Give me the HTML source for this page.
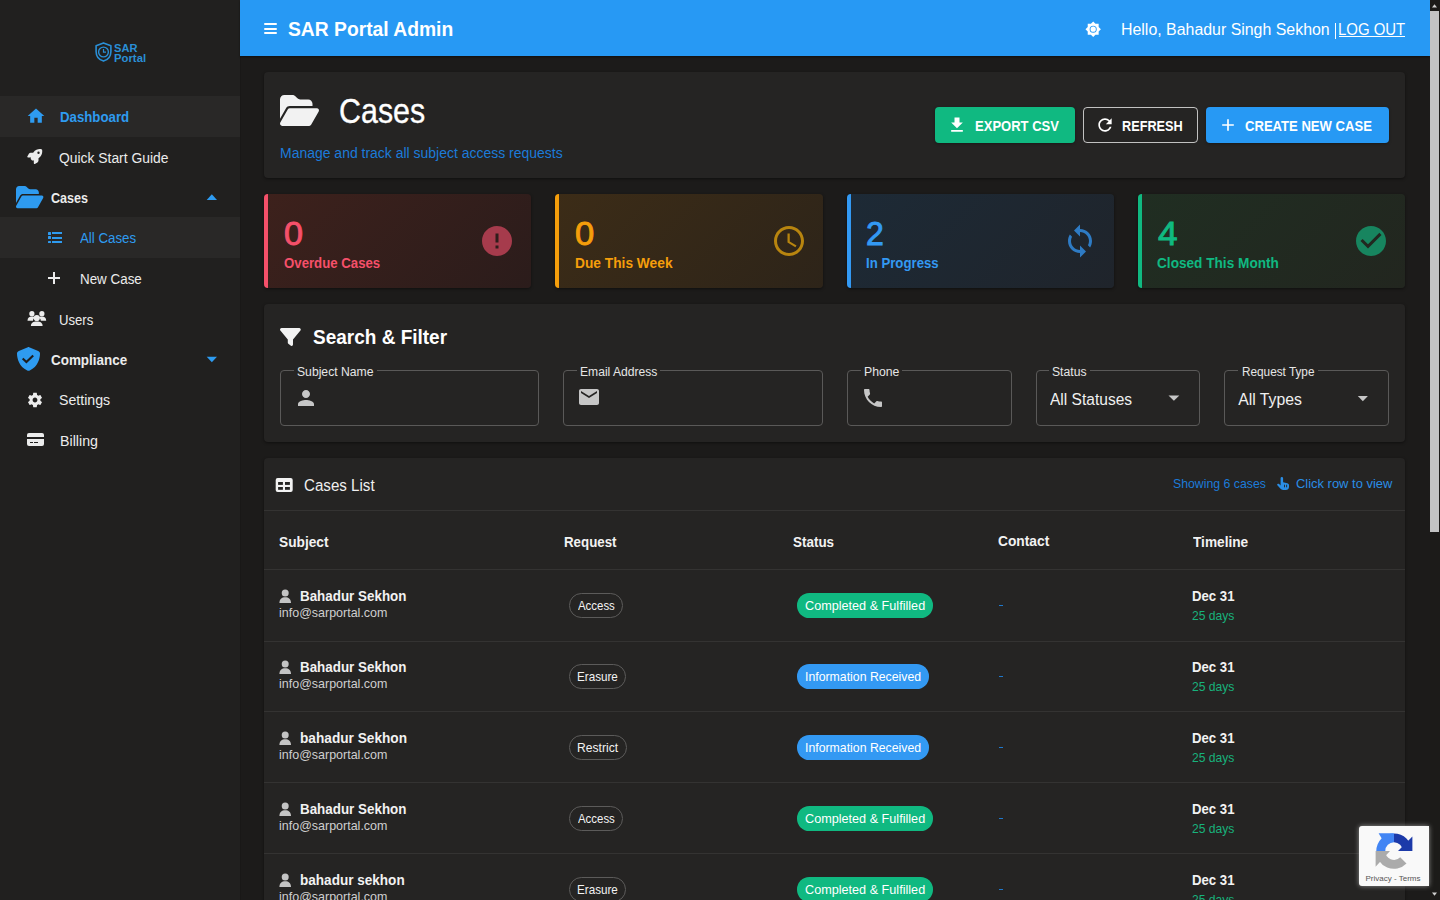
<!DOCTYPE html>
<html><head><meta charset="utf-8"><title>SAR Portal Admin - Cases</title>
<style>
html,body{margin:0;padding:0;width:1440px;height:900px;overflow:hidden;background:#1c1b1a;font-family:"Liberation Sans",sans-serif}
.t{position:absolute;white-space:pre;transform-origin:0 0}
.r{position:absolute;box-sizing:border-box}
svg{position:absolute;overflow:visible}
</style></head><body>
<!-- sidebar -->
<div class="r" style="left:0;top:0;width:240px;height:900px;background:#21201f"></div>
<div class="r" style="left:240px;top:0;width:1px;height:900px;background:#191817"></div>
<div class="r" style="left:0;top:96px;width:240px;height:41px;background:#292827"></div>
<div class="r" style="left:0;top:217px;width:240px;height:41px;background:#292827"></div>
<!-- logo -->
<svg style="left:95px;top:42px" width="17" height="20" viewBox="0 0 17 20">
 <path d="M8.5 0.9 L15.9 3.7 V9.4 C15.9 14.1 12.9 17.7 8.5 19.1 C4.1 17.7 1.1 14.1 1.1 9.4 V3.7 Z" fill="none" stroke="#2a8fd6" stroke-width="1.6" stroke-linejoin="round"/>
 <circle cx="8.5" cy="10" r="4.9" fill="none" stroke="#2a8fd6" stroke-width="1.4"/>
 <path d="M8.5 6.9 V10.2 H11" fill="none" stroke="#2a8fd6" stroke-width="1.2"/>
</svg>
<!-- home -->
<svg style="left:26px;top:106.2px" width="20" height="20" viewBox="0 0 24 24"><path fill="#2e9bf0" d="M10 20v-6h4v6h5v-8h3L12 3 2 12h3v8z"/></svg>
<!-- rocket -->
<svg style="left:27.3px;top:149.2px" width="15.5" height="15" viewBox="0 0 512 512"><path fill="#ececec" d="M156.6 384.9L125.7 354c-8.5-8.5-11.5-20.8-7.7-32.2c3-8.9 7-20.5 11.8-33.8L24 288c-8.6 0-16.6-4.6-20.9-12.1s-4.2-16.7 .2-24.1l52.5-88.5c13-21.9 36.5-35.3 61.9-35.3l82.3 0c2.4-4 4.8-7.7 7.2-11.3C289.1-4.1 411.1-8.1 483.9 5.3c11.6 2.1 20.6 11.2 22.8 22.8c13.4 72.9 9.3 194.8-111.4 277.2c-3.5 2.4-7.3 4.8-11.3 7.2l0 82.3c0 25.4-13.4 49-35.3 61.9l-88.5 52.5c-7.4 4.4-16.6 4.5-24.1 .2s-12.1-12.2-12.1-20.9l0-107.2c-14.1 4.9-26.4 8.9-35.7 11.9c-11.2 3.6-23.4 .5-31.8-7.8zM384 168a40 40 0 1 0 0-80 40 40 0 1 0 0 80z"/></svg>
<!-- folder sidebar -->
<svg style="left:15.6px;top:185.8px" width="27.4" height="22.2" viewBox="0 32 576 448" preserveAspectRatio="none"><path fill="#2e9bf0" d="M88.7 223.8L0 375.8V96C0 60.7 28.7 32 64 32H181.5c17 0 33.3 6.7 45.3 18.7l26.5 26.5c12 12 28.3 18.7 45.3 18.7H416c35.3 0 64 28.7 64 64v32H144c-22.8 0-43.8 12.1-55.3 31.8zm27.6 16.1C122.1 230 132.6 224 144 224H544c11.5 0 22 6.1 27.7 16.1s5.7 22.2-.1 32.1l-112 192C453.9 474 443.4 480 432 480H32c-11.5 0-22-6.1-27.7-16.1s-5.7-22.2 .1-32.1l112-192z"/></svg>
<!-- caret up -->
<svg style="left:0;top:0" width="1" height="1"><polygon points="206.7,200 217,200 211.85,194.2" fill="#2e9bf0"/></svg>
<!-- list icon -->
<div class="r" style="left:48.1px;top:232px;width:2.6px;height:2.6px;background:#2e9bf0;border-radius:.5px"></div>
<div class="r" style="left:48.1px;top:236.4px;width:2.6px;height:2.6px;background:#2e9bf0;border-radius:.5px"></div>
<div class="r" style="left:48.1px;top:240.8px;width:2.6px;height:2.6px;background:#2e9bf0;border-radius:.5px"></div>
<div class="r" style="left:51.6px;top:232.4px;width:10.5px;height:1.8px;background:#2e9bf0"></div>
<div class="r" style="left:51.6px;top:236.8px;width:10.5px;height:1.8px;background:#2e9bf0"></div>
<div class="r" style="left:51.6px;top:241.2px;width:10.5px;height:1.8px;background:#2e9bf0"></div>
<!-- plus -->
<div class="r" style="left:48px;top:276.9px;width:12.2px;height:2px;background:#ececec"></div>
<div class="r" style="left:53.1px;top:271.8px;width:2px;height:12.1px;background:#ececec"></div>
<!-- users -->
<svg style="left:0;top:0" width="1" height="1">
 <g fill="#ececec">
 <circle cx="31.9" cy="313.7" r="2.6"/><circle cx="41.9" cy="313.7" r="2.6"/>
 <path d="M27.5 320.8 C27.5 317.8 29.3 316.6 31.9 316.6 C33.3 316.6 34.3 317 34.9 317.6 C33.6 318.6 33 319.6 33 320.8 Z"/>
 <path d="M46.2 320.8 C46.2 317.8 44.5 316.6 41.9 316.6 C40.5 316.6 39.5 317 38.9 317.6 C40.2 318.6 40.8 319.6 40.8 320.8 Z"/>
 <circle cx="36.8" cy="318" r="3.1"/>
 <path d="M30.9 326 C30.9 322.9 33.3 321.6 36.8 321.6 C40.3 321.6 42.6 322.9 42.6 326 Z"/>
 </g>
</svg>
<!-- compliance shield -->
<svg style="left:16.6px;top:347px" width="23" height="24" viewBox="16 0 480 512" preserveAspectRatio="none"><path fill="#2e9bf0" d="M256 0c4.6 0 9.2 1 13.4 2.9L457.7 82.8c22 9.3 38.4 31 38.3 57.2c-.5 99.2-41.3 280.7-213.6 363.2c-16.7 8-36.1 8-52.8 0C57.3 420.7 16.5 239.2 16 140c-.1-26.2 16.3-47.9 38.3-57.2L242.7 2.9C246.8 1 251.4 0 256 0z"/></svg>
<svg style="left:0;top:0" width="1" height="1"><path d="M22.7 358.6 L26.4 362.1 L33.2 355.4" fill="none" stroke="#1f1e1d" stroke-width="2.1"/></svg>
<!-- caret down -->
<svg style="left:0;top:0" width="1" height="1"><polygon points="206.7,356.8 217,356.8 211.85,362.2" fill="#2e9bf0"/></svg>
<!-- gear -->
<svg style="left:25.7px;top:390.9px" width="18" height="18" viewBox="0 0 24 24"><path fill="#ececec" fill-rule="evenodd" d="M19.14 12.94c.04-.3.06-.61.06-.94 0-.32-.02-.64-.07-.94l2.03-1.58c.18-.14.23-.41.12-.61l-1.92-3.32c-.12-.22-.37-.29-.59-.22l-2.39.96c-.5-.38-1.03-.7-1.62-.94l-.36-2.54c-.04-.24-.24-.41-.48-.41h-3.84c-.24 0-.43.17-.47.41l-.36 2.54c-.59.24-1.13.57-1.62.94l-2.39-.96c-.22-.08-.47 0-.59.22L2.74 8.87c-.12.21-.08.47.12.61l2.03 1.580c-.05.3-.09.63-.09.94s.02.64.07.94l-2.03 1.58c-.18.14-.23.41-.12.61l1.92 3.32c.12.22.37.29.59.22l2.39-.96c.5.38 1.030.7 1.62.94l.36 2.54c.05.24.24.41.48.41h3.84c.24 0 .44-.17.47-.41l.36-2.54c.59-.24 1.13-.56 1.62-.94l2.39.96c.22.08.47 0 .59-.22l1.92-3.32c.12-.22.07-.47-.12-.61l-2.01-1.58zM12 15.2c-1.77 0-3.2-1.43-3.2-3.2s1.43-3.2 3.2-3.2 3.2 1.43 3.2 3.2-1.43 3.2-3.2 3.2z"/></svg>
<!-- credit card -->
<div class="r" style="left:27.2px;top:433px;width:17px;height:13.3px;background:#ececec;border-radius:2px"></div>
<div class="r" style="left:27.2px;top:436.6px;width:17px;height:2.2px;background:#21201f"></div>
<div class="r" style="left:30.2px;top:442.4px;width:3px;height:1px;background:#21201f"></div>
<div class="r" style="left:34.2px;top:442.4px;width:3.5px;height:1px;background:#21201f"></div>

<!-- header -->
<div class="r" style="left:240px;top:0;width:1190px;height:56px;background:#2799f4;box-shadow:0 1px 2px rgba(0,0,0,.45)"></div>
<div class="r" style="left:263.75px;top:23.3px;width:13px;height:1.9px;background:#fff;border-radius:1px"></div>
<div class="r" style="left:263.75px;top:27.8px;width:13px;height:1.9px;background:#fff;border-radius:1px"></div>
<div class="r" style="left:263.75px;top:32.1px;width:13px;height:1.9px;background:#fff;border-radius:1px"></div>
<svg style="left:1085.4px;top:20.55px" width="16.4" height="16.4" viewBox="0 0 24 24"><path fill="#fff" fill-rule="evenodd" d="M20 8.69V4h-4.69L12 .69 8.69 4H4v4.69L.69 12 4 15.31V20h4.69L12 23.31 15.31 20H20v-4.69L23.31 12 20 8.69z M12 17.2a5.2 5.2 0 1 1 0-10.4 5.2 5.2 0 1 1 0 10.4z M12 8.1a3.9 3.9 0 1 0 0 7.8 3.9 3.9 0 1 0 0-7.8z"/></svg>
<div class="r" style="left:1334.9px;top:22.8px;width:1.4px;height:16px;background:#fff"></div>
<div class="r" style="left:1338.6px;top:36.3px;width:66.2px;height:1px;background:#fff"></div>

<!-- scrollbar -->
<div class="r" style="left:1430px;top:0;width:10px;height:900px;background:#1c1b19"></div>
<div class="r" style="left:1430px;top:11px;width:9px;height:521px;background:#c3c3c3"></div>
<svg style="left:0;top:0" width="1" height="1"><polygon points="1432,7.5 1437,7.5 1434.5,4.3" fill="#d0d0d0"/><polygon points="1432,892.6 1437,892.6 1434.5,895.8" fill="#d0d0d0"/></svg>

<!-- page header card -->
<div class="r" style="left:264px;top:72px;width:1141px;height:105.5px;background:#252423;border-radius:4px;box-shadow:0 1px 3px rgba(0,0,0,.45)"></div>
<svg style="left:279.75px;top:94.75px" width="39" height="30.9" viewBox="0 32 576 448" preserveAspectRatio="none"><path fill="#f2f2f2" d="M88.7 223.8L0 375.8V96C0 60.7 28.7 32 64 32H181.5c17 0 33.3 6.7 45.3 18.7l26.5 26.5c12 12 28.3 18.7 45.3 18.7H416c35.3 0 64 28.7 64 64v32H144c-22.8 0-43.8 12.1-55.3 31.8zm27.6 16.1C122.1 230 132.6 224 144 224H544c11.5 0 22 6.1 27.7 16.1s5.7 22.2-.1 32.1l-112 192C453.9 474 443.4 480 432 480H32c-11.5 0-22-6.1-27.7-16.1s-5.7-22.2 .1-32.1l112-192z"/></svg>
<div class="r" style="left:935px;top:107px;width:140.3px;height:36px;background:#10b981;border-radius:4px;box-shadow:0 1px 3px rgba(0,0,0,.3)"></div>
<svg style="left:946.6px;top:114.6px" width="20" height="20" viewBox="0 0 24 24"><path fill="#fff" d="M5 20h14v-2H5v2zM19 9h-4V3H9v6H5l7 7 7-7z"/></svg>
<div class="r" style="left:1083px;top:107px;width:115px;height:36px;border:1px solid rgba(255,255,255,.72);border-radius:4px"></div>
<svg style="left:1094.6px;top:114.6px" width="20" height="20" viewBox="0 0 24 24"><path fill="#fff" d="M17.65 6.35C16.2 4.9 14.21 4 12 4c-4.42 0-7.99 3.58-7.99 8s3.57 8 7.99 8c3.73 0 6.84-2.55 7.73-6h-2.08c-.82 2.33-3.04 4-5.65 4-3.31 0-6-2.69-6-6s2.69-6 6-6c1.66 0 3.14.69 4.22 1.78L13 11h7V4l-2.35 2.35z"/></svg>
<div class="r" style="left:1206px;top:106.7px;width:182.7px;height:36.4px;background:#2799f4;border-radius:4px;box-shadow:0 1px 3px rgba(0,0,0,.3)"></div>
<svg style="left:1217.7px;top:114.6px" width="20" height="20" viewBox="0 0 24 24"><path fill="#fff" d="M19 13h-6v6h-2v-6H5v-2h6V5h2v6h6v2z"/></svg>

<!-- stat cards -->
<div class="r" style="left:264px;top:194px;width:267.25px;height:94px;border-radius:4px;background:linear-gradient(135deg,#3d211c 0%,#2b1c1b 100%);box-shadow:0 1px 3px rgba(0,0,0,.45)"></div>
<div class="r" style="left:264px;top:194px;width:4px;height:94px;border-radius:4px 0 0 4px;background:#f5506a"></div>
<svg style="left:479.2px;top:222.7px" width="36" height="36" viewBox="0 0 24 24"><path fill="#a63b4c" fill-rule="evenodd" d="M12 2C6.48 2 2 6.48 2 12s4.48 10 10 10 10-4.48 10-10S17.52 2 12 2zm1 15h-2v-2h2v2zm0-4h-2V7h2v6z"/></svg>

<div class="r" style="left:555.25px;top:194px;width:267.25px;height:94px;border-radius:4px;background:linear-gradient(135deg,#3c2c17 0%,#2d2419 100%);box-shadow:0 1px 3px rgba(0,0,0,.45)"></div>
<div class="r" style="left:555.25px;top:194px;width:4px;height:94px;border-radius:4px 0 0 4px;background:#f59e0b"></div>
<svg style="left:770.7px;top:222.7px" width="36" height="36" viewBox="0 0 24 24"><path fill="#b8850f" fill-rule="evenodd" d="M11.99 2C6.47 2 2 6.48 2 12s4.47 10 9.99 10C17.52 22 22 17.52 22 12S17.52 2 11.99 2zM12 20c-4.42 0-8-3.58-8-8s3.58-8 8-8 8 3.58 8 8-3.58 8-8 8zm.5-13H11v6l5.25 3.15.75-1.23-4.5-2.67z"/></svg>

<div class="r" style="left:846.5px;top:194px;width:267.25px;height:94px;border-radius:4px;background:linear-gradient(135deg,#1d2a36 0%,#1f242b 100%);box-shadow:0 1px 3px rgba(0,0,0,.45)"></div>
<div class="r" style="left:846.5px;top:194px;width:4px;height:94px;border-radius:4px 0 0 4px;background:#3399f3"></div>
<svg style="left:1061.7px;top:222.7px" width="36" height="36" viewBox="0 0 24 24"><path fill="#2e7bc4" d="M12 4V1L8 5l4 4V6c3.31 0 6 2.69 6 6 0 1.01-.25 1.97-.7 2.8l1.46 1.46C19.54 15.03 20 13.57 20 12c0-4.42-3.58-8-8-8zm0 14c-3.31 0-6-2.69-6-6 0-1.01.25-1.97.7-2.8L5.24 7.74C4.46 8.97 4 10.43 4 12c0 4.42 3.58 8 8 8v3l4-4-4-4v3z"/></svg>

<div class="r" style="left:1137.75px;top:194px;width:267.25px;height:94px;border-radius:4px;background:linear-gradient(135deg,#202e22 0%,#22261f 100%);box-shadow:0 1px 3px rgba(0,0,0,.45)"></div>
<div class="r" style="left:1137.75px;top:194px;width:4px;height:94px;border-radius:4px 0 0 4px;background:#10b981"></div>
<svg style="left:1352.8px;top:222.7px" width="36" height="36" viewBox="0 0 24 24"><path fill="#17855f" fill-rule="evenodd" d="M12 2C6.48 2 2 6.48 2 12s4.48 10 10 10 10-4.48 10-10S17.52 2 12 2zm-2 15l-5-5 1.41-1.41L10 14.17l7.59-7.59L19 8l-9 9z"/></svg>

<!-- filter card -->
<div class="r" style="left:264px;top:304px;width:1141px;height:138px;background:#252423;border-radius:4px;box-shadow:0 1px 3px rgba(0,0,0,.45)"></div>
<svg style="left:279.7px;top:327.6px" width="20.8" height="17.9" viewBox="0 32 512 448" preserveAspectRatio="none"><path fill="#f2f2f2" d="M3.9 54.9C10.5 40.9 24.5 32 40 32H472c15.5 0 29.5 8.9 36.1 22.9s4.6 30.5-5.2 42.5L320 320.9V448c0 12.1-6.8 23.2-17.7 28.6s-23.8 4.3-33.5-3l-64-48c-8.1-6-12.8-15.5-12.8-25.6V320.9L9 97.3C-.7 85.4-2.6 68.8 3.9 54.9z"/></svg>
<!-- inputs -->
<div class="r" style="left:280px;top:370px;width:259.3px;height:55.5px;border:1px solid #5a5958;border-radius:4px"></div>
<div class="r" style="left:293.75px;top:368px;width:83.35px;height:4px;background:#252423"></div>
<svg style="left:293.8px;top:385.9px" width="24" height="24" viewBox="0 0 24 24"><path fill="#c6c6c6" d="M12 12c2.21 0 4-1.79 4-4s-1.79-4-4-4-4 1.79-4 4 1.79 4 4 4zm0 2c-2.67 0-8 1.34-8 4v2h16v-2c0-2.66-5.33-4-8-4z"/></svg>
<div class="r" style="left:563.1px;top:370px;width:259.8px;height:55.5px;border:1px solid #5a5958;border-radius:4px"></div>
<div class="r" style="left:577px;top:368px;width:83.4px;height:4px;background:#252423"></div>
<svg style="left:577px;top:385.4px" width="24" height="24" viewBox="0 0 24 24"><path fill="#c6c6c6" d="M20 4H4c-1.1 0-1.99.9-1.99 2L2 18c0 1.1.9 2 2 2h16c1.1 0 2-.9 2-2V6c0-1.1-.9-2-2-2zm0 4l-8 5-8-5V6l8 5 8-5v2z"/></svg>
<div class="r" style="left:846.5px;top:370px;width:165px;height:55.5px;border:1px solid #5a5958;border-radius:4px"></div>
<div class="r" style="left:860.8px;top:368px;width:41.7px;height:4px;background:#252423"></div>
<svg style="left:860.7px;top:385.7px" width="24" height="24" viewBox="0 0 24 24"><path fill="#c6c6c6" d="M6.62 10.79c1.44 2.83 3.76 5.14 6.59 6.59l2.2-2.2c.27-.27.67-.36 1.02-.24 1.12.37 2.33.57 3.57.57.55 0 1 .45 1 1V20c0 .55-.45 1-1 1-9.39 0-17-7.61-17-17 0-.55.45-1 1-1h3.5c.55 0 1 .45 1 1 0 1.25.2 2.45.57 3.57.11.35.03.74-.25 1.02l-2.2 2.2z"/></svg>
<div class="r" style="left:1035.5px;top:370px;width:164px;height:55.5px;border:1px solid #5a5958;border-radius:4px"></div>
<div class="r" style="left:1049.2px;top:368px;width:40.8px;height:4px;background:#252423"></div>
<svg style="left:0;top:0" width="1" height="1"><polygon points="1168.5,395.4 1179.3,395.4 1173.9,400.7" fill="#c6c6c6"/></svg>
<div class="r" style="left:1224px;top:370px;width:165px;height:55.5px;border:1px solid #5a5958;border-radius:4px"></div>
<div class="r" style="left:1238px;top:368px;width:79.7px;height:4px;background:#252423"></div>
<svg style="left:0;top:0" width="1" height="1"><polygon points="1357.8,396 1367.9,396 1362.85,401.3" fill="#c6c6c6"/></svg>

<!-- cases list card -->
<div class="r" style="left:264px;top:458px;width:1141px;height:500px;background:#252423;border-radius:4px;box-shadow:0 1px 3px rgba(0,0,0,.45)"></div>
<svg style="left:0;top:0" width="1" height="1">
 <rect x="275.7" y="478" width="17" height="14" rx="2" fill="#f2f2f2"/>
 <rect x="278.1" y="482" width="4.8" height="2.9" fill="#252423"/>
 <rect x="285" y="482" width="4.9" height="2.9" fill="#252423"/>
 <rect x="278.1" y="487" width="4.8" height="2.8" fill="#252423"/>
 <rect x="285" y="487" width="4.9" height="2.8" fill="#252423"/>
</svg>
<svg style="left:0;top:0" width="1" height="1"><path fill="#2a8ee6" d="M1280.6 478.3 a1.25 1.25 0 0 1 2.5 0 V482.3 L1287.2 483.2 C1288.3 483.4 1289 484.2 1289 485.3 V487 C1289 488.8 1287.6 490 1285.8 490 H1283.2 C1282 490 1281 489.5 1280.3 488.6 L1277.4 485.3 C1277 484.8 1277.1 484.2 1277.6 483.9 C1278.1 483.6 1278.7 483.7 1279.1 484.1 L1280.6 485.6 Z"/><rect x="1284.1" y="484.7" width="0.9" height="2.6" fill="#252423"/><rect x="1286.2" y="484.7" width="0.9" height="2.6" fill="#252423"/></svg>
<div class="r" style="left:264px;top:510px;width:1141px;height:1px;background:#343332"></div>
<div class="r" style="left:264px;top:569px;width:1141px;height:1px;background:#343332"></div>
<div class="r" style="left:264px;top:640.5px;width:1141px;height:1px;background:#343332"></div>
<div class="r" style="left:264px;top:711px;width:1141px;height:1px;background:#343332"></div>
<div class="r" style="left:264px;top:782.2px;width:1141px;height:1px;background:#343332"></div>
<div class="r" style="left:264px;top:853.3px;width:1141px;height:1px;background:#343332"></div>
<svg style="left:0;top:0" width="1" height="1"><circle cx="285.2" cy="592.9" r="3.5" fill="#c4c4c4"/><path d="M279.4 603.0 C279.4 599.3 281.8 597.3 285.2 597.3 C288.6 597.3 291 599.3 291 603.0 Z" fill="#c4c4c4"/></svg>
<div class="r" style="left:569.2px;top:593px;width:54px;height:24.6px;border:1px solid #5c5b5a;border-radius:12.3px"></div>
<div class="r" style="left:797.2px;top:593px;width:135.7px;height:24.5px;background:#10b981;border-radius:12.3px"></div>
<div class="r" style="left:999px;top:605.4px;width:3.5px;height:1px;background:#1f78cc"></div>
<svg style="left:0;top:0" width="1" height="1"><circle cx="285.2" cy="663.9" r="3.5" fill="#c4c4c4"/><path d="M279.4 674.0 C279.4 670.3 281.8 668.3 285.2 668.3 C288.6 668.3 291 670.3 291 674.0 Z" fill="#c4c4c4"/></svg>
<div class="r" style="left:569.2px;top:664px;width:56.8px;height:24.6px;border:1px solid #5c5b5a;border-radius:12.3px"></div>
<div class="r" style="left:797.2px;top:664px;width:131.4px;height:24.5px;background:#3399f3;border-radius:12.3px"></div>
<div class="r" style="left:999px;top:676.4px;width:3.5px;height:1px;background:#1f78cc"></div>
<svg style="left:0;top:0" width="1" height="1"><circle cx="285.2" cy="734.9" r="3.5" fill="#c4c4c4"/><path d="M279.4 745.0 C279.4 741.3 281.8 739.3 285.2 739.3 C288.6 739.3 291 741.3 291 745.0 Z" fill="#c4c4c4"/></svg>
<div class="r" style="left:569.2px;top:735px;width:57.4px;height:24.6px;border:1px solid #5c5b5a;border-radius:12.3px"></div>
<div class="r" style="left:797.2px;top:735px;width:131.4px;height:24.5px;background:#3399f3;border-radius:12.3px"></div>
<div class="r" style="left:999px;top:747.4px;width:3.5px;height:1px;background:#1f78cc"></div>
<svg style="left:0;top:0" width="1" height="1"><circle cx="285.2" cy="805.9" r="3.5" fill="#c4c4c4"/><path d="M279.4 816.0 C279.4 812.3 281.8 810.3 285.2 810.3 C288.6 810.3 291 812.3 291 816.0 Z" fill="#c4c4c4"/></svg>
<div class="r" style="left:569.2px;top:806px;width:54px;height:24.6px;border:1px solid #5c5b5a;border-radius:12.3px"></div>
<div class="r" style="left:797.2px;top:806px;width:135.7px;height:24.5px;background:#10b981;border-radius:12.3px"></div>
<div class="r" style="left:999px;top:818.4px;width:3.5px;height:1px;background:#1f78cc"></div>
<svg style="left:0;top:0" width="1" height="1"><circle cx="285.2" cy="876.9" r="3.5" fill="#c4c4c4"/><path d="M279.4 887.0 C279.4 883.3 281.8 881.3 285.2 881.3 C288.6 881.3 291 883.3 291 887.0 Z" fill="#c4c4c4"/></svg>
<div class="r" style="left:569.2px;top:877px;width:56.8px;height:24.6px;border:1px solid #5c5b5a;border-radius:12.3px"></div>
<div class="r" style="left:797.2px;top:877px;width:135.7px;height:24.5px;background:#10b981;border-radius:12.3px"></div>
<div class="r" style="left:999px;top:889.4px;width:3.5px;height:1px;background:#1f78cc"></div>
<!-- recaptcha -->
<div class="r" style="left:1359px;top:826px;width:70px;height:60px;background:#f9f9f9;border-radius:3px 0 0 3px;box-shadow:0 0 5px rgba(160,160,160,.9)"></div>
<svg style="left:0;top:0" width="1" height="1">
 <path fill="#ababab" d="M1376.3 851 A17.6 17.6 0 0 0 1406.5 863.5 L1400.2 857.2 A8.7 8.7 0 0 1 1385.3 851 Z"/>
 <path fill="#ababab" d="M1375.6 851 V866.8 L1390 851 Z"/>
 <path fill="#4285f4" d="M1376.3 851 A17.6 17.6 0 0 1 1394 833.4 V842.3 A8.7 8.7 0 0 0 1385.3 851 Z"/>
 <path fill="#4285f4" d="M1378.6 833.3 H1394 L1386 845.5 Z"/>
 <path fill="#1c3aa9" d="M1394 833.4 A17.6 17.6 0 0 1 1411.6 851 H1402.7 A8.7 8.7 0 0 0 1394 842.3 Z"/>
 <path fill="#1c3aa9" d="M1412.4 836.6 V851 H1398 Z"/>
</svg>
<div class="t" style="left:1365.5px;top:873.5px;font-size:8px;line-height:9px;color:#555">Privacy - Terms</div>

<div class='t' style='left:287.77px;top:19.97px;font-size:19.57px;line-height:19.57px;font-weight:700;color:#ffffff;transform:scaleX(0.9849);'>SAR Portal Admin</div>
<div class='t' style='left:1120.79px;top:21.97px;font-size:15.8px;line-height:15.8px;font-weight:400;color:#ffffff;transform:scaleX(1.0068);'>Hello, Bahadur Singh Sekhon</div>
<div class='t' style='left:1337.65px;top:21.97px;font-size:15.8px;line-height:15.8px;font-weight:400;color:#ffffff;transform:scaleX(0.9457);'>LOG OUT</div>
<div class='t' style='left:113.73px;top:43.27px;font-size:11.45px;line-height:11.45px;font-weight:700;color:#2a8fd6;transform:scaleX(0.9696);'>SAR</div>
<div class='t' style='left:113.72px;top:52.75px;font-size:11.59px;line-height:11.59px;font-weight:700;color:#2a8fd6;transform:scaleX(0.9774);'>Portal</div>
<div class='t' style='left:59.79px;top:110.38px;font-size:14.49px;line-height:14.49px;font-weight:700;color:#2e9bf0;transform:scaleX(0.9135);'>Dashboard</div>
<div class='t' style='left:59.20px;top:151.68px;font-size:13.91px;line-height:13.91px;font-weight:400;color:#ececec;transform:scaleX(0.9972);'>Quick Start Guide</div>
<div class='t' style='left:51.23px;top:191.18px;font-size:14.49px;line-height:14.49px;font-weight:700;color:#ececec;transform:scaleX(0.8683);'>Cases</div>
<div class='t' style='left:80.00px;top:231.18px;font-size:14.49px;line-height:14.49px;font-weight:400;color:#2e9bf0;transform:scaleX(0.9180);'>All Cases</div>
<div class='t' style='left:79.78px;top:272.28px;font-size:14.49px;line-height:14.49px;font-weight:400;color:#ececec;transform:scaleX(0.9246);'>New Case</div>
<div class='t' style='left:59.48px;top:313.33px;font-size:14.2px;line-height:14.2px;font-weight:400;color:#ececec;transform:scaleX(0.9250);'>Users</div>
<div class='t' style='left:51.19px;top:353.04px;font-size:14.78px;line-height:14.78px;font-weight:700;color:#ececec;transform:scaleX(0.9098);'>Compliance</div>
<div class='t' style='left:59.02px;top:393.28px;font-size:14.49px;line-height:14.49px;font-weight:400;color:#ececec;transform:scaleX(0.9765);'>Settings</div>
<div class='t' style='left:59.74px;top:434.04px;font-size:14.78px;line-height:14.78px;font-weight:400;color:#ececec;transform:scaleX(0.9632);'>Billing</div>
<div class='t' style='left:339.23px;top:94.09px;font-size:34.42px;line-height:34.42px;font-weight:400;color:#ffffff;transform:scaleX(0.8842);-webkit-text-stroke:.35px #fff'>Cases</div>
<div class='t' style='left:279.70px;top:146.98px;font-size:13.91px;line-height:13.91px;font-weight:400;color:#1c7bd9;transform:scaleX(1.0046);'>Manage and track all subject access requests</div>
<div class='t' style='left:974.78px;top:119.39px;font-size:14.13px;line-height:14.13px;font-weight:700;color:#ffffff;transform:scaleX(0.9222);'>EXPORT CSV</div>
<div class='t' style='left:1122.02px;top:119.08px;font-size:14.49px;line-height:14.49px;font-weight:700;color:#ffffff;transform:scaleX(0.8776);'>REFRESH</div>
<div class='t' style='left:1245.31px;top:119.78px;font-size:13.91px;line-height:13.91px;font-weight:700;color:#ffffff;transform:scaleX(0.9403);'>CREATE NEW CASE</div>
<div class='t' style='left:283.98px;top:216.53px;font-size:33.61px;line-height:33.61px;font-weight:400;color:#f5506a;transform:scaleX(1.0176);-webkit-text-stroke:.9px #f5506a'>0</div>
<div class='t' style='left:283.66px;top:255.65px;font-size:14.06px;line-height:14.06px;font-weight:700;color:#f5506a;transform:scaleX(0.9406);'>Overdue Cases</div>
<div class='t' style='left:575.22px;top:216.53px;font-size:33.61px;line-height:33.61px;font-weight:400;color:#f59e0b;transform:scaleX(1.0294);-webkit-text-stroke:.9px #f59e0b'>0</div>
<div class='t' style='left:574.82px;top:255.65px;font-size:14.06px;line-height:14.06px;font-weight:700;color:#f59e0b;transform:scaleX(0.9786);'>Due This Week</div>
<div class='t' style='left:866.15px;top:216.53px;font-size:33.61px;line-height:33.61px;font-weight:400;color:#3399f3;transform:scaleX(0.9529);-webkit-text-stroke:.9px #3399f3'>2</div>
<div class='t' style='left:865.76px;top:255.65px;font-size:14.06px;line-height:14.06px;font-weight:700;color:#3399f3;transform:scaleX(0.9408);'>In Progress</div>
<div class='t' style='left:1157.80px;top:216.53px;font-size:33.61px;line-height:33.61px;font-weight:400;color:#10b981;transform:scaleX(1.0500);-webkit-text-stroke:.9px #10b981'>4</div>
<div class='t' style='left:1156.83px;top:255.65px;font-size:14.06px;line-height:14.06px;font-weight:700;color:#10b981;transform:scaleX(0.9702);'>Closed This Month</div>
<div class='t' style='left:313.36px;top:326.95px;font-size:20.29px;line-height:20.29px;font-weight:700;color:#ffffff;transform:scaleX(0.9366);'>Search &amp; Filter</div>
<div class='t' style='left:296.93px;top:365.68px;font-size:12.61px;line-height:12.61px;font-weight:400;color:#e6e6e6;transform:scaleX(0.9654);'>Subject Name</div>
<div class='t' style='left:580.29px;top:365.68px;font-size:12.61px;line-height:12.61px;font-weight:400;color:#e6e6e6;transform:scaleX(0.9595);'>Email Address</div>
<div class='t' style='left:863.73px;top:365.88px;font-size:12.61px;line-height:12.61px;font-weight:400;color:#e6e6e6;transform:scaleX(0.9714);'>Phone</div>
<div class='t' style='left:1052.04px;top:365.88px;font-size:12.61px;line-height:12.61px;font-weight:400;color:#e6e6e6;transform:scaleX(0.9647);'>Status</div>
<div class='t' style='left:1241.57px;top:365.78px;font-size:12.61px;line-height:12.61px;font-weight:400;color:#e6e6e6;transform:scaleX(0.9342);'>Request Type</div>
<div class='t' style='left:1049.50px;top:392.17px;font-size:15.8px;line-height:15.8px;font-weight:400;color:#f0f0f0;transform:scaleX(0.9843);'>All Statuses</div>
<div class='t' style='left:1238.20px;top:392.27px;font-size:15.8px;line-height:15.8px;font-weight:400;color:#f0f0f0;transform:scaleX(1.0000);'>All Types</div>
<div class='t' style='left:303.75px;top:478.35px;font-size:15.94px;line-height:15.94px;font-weight:400;color:#f0f0f0;transform:scaleX(0.9493);'>Cases List</div>
<div class='t' style='left:1172.56px;top:477.42px;font-size:13.04px;line-height:13.04px;font-weight:400;color:#1c7bd9;transform:scaleX(0.9433);'>Showing 6 cases</div>
<div class='t' style='left:1295.81px;top:477.42px;font-size:13.04px;line-height:13.04px;font-weight:400;color:#2a8ee6;transform:scaleX(0.9927);'>Click row to view</div>
<div class='t' style='left:278.81px;top:535.78px;font-size:13.91px;line-height:13.91px;font-weight:700;color:#f2f2f2;transform:scaleX(0.9857);'>Subject</div>
<div class='t' style='left:564.44px;top:535.68px;font-size:13.91px;line-height:13.91px;font-weight:700;color:#f2f2f2;transform:scaleX(0.9574);'>Request</div>
<div class='t' style='left:792.53px;top:535.68px;font-size:13.91px;line-height:13.91px;font-weight:700;color:#f2f2f2;transform:scaleX(0.9659);'>Status</div>
<div class='t' style='left:997.51px;top:534.58px;font-size:13.91px;line-height:13.91px;font-weight:700;color:#f2f2f2;transform:scaleX(0.9902);'>Contact</div>
<div class='t' style='left:1192.90px;top:535.68px;font-size:13.91px;line-height:13.91px;font-weight:700;color:#f2f2f2;transform:scaleX(0.9821);'>Timeline</div>
<div class='t' style='left:300.34px;top:589.98px;font-size:13.91px;line-height:13.91px;font-weight:700;color:#f2f2f2;transform:scaleX(0.9633);'>Bahadur Sekhon</div>
<div class='t' style='left:279.10px;top:607.31px;font-size:12.46px;line-height:12.46px;font-weight:400;color:#cfcfcf;transform:scaleX(1.0028);'>info@sarportal.com</div>
<div class='t' style='left:578.00px;top:598.97px;font-size:13.33px;line-height:13.33px;font-weight:400;color:#f2f2f2;transform:scaleX(0.8571);'>Access</div>
<div class='t' style='left:804.54px;top:599.49px;font-size:13.19px;line-height:13.19px;font-weight:400;color:#ffffff;transform:scaleX(0.9589);'>Completed &amp; Fulfilled</div>
<div class='t' style='left:1191.74px;top:589.80px;font-size:13.77px;line-height:13.77px;font-weight:700;color:#f2f2f2;transform:scaleX(0.9581);'>Dec 31</div>
<div class='t' style='left:1191.75px;top:609.66px;font-size:12.75px;line-height:12.75px;font-weight:400;color:#18b27c;transform:scaleX(0.9488);'>25 days</div>
<div class='t' style='left:300.34px;top:660.98px;font-size:13.91px;line-height:13.91px;font-weight:700;color:#f2f2f2;transform:scaleX(0.9633);'>Bahadur Sekhon</div>
<div class='t' style='left:279.10px;top:678.31px;font-size:12.46px;line-height:12.46px;font-weight:400;color:#cfcfcf;transform:scaleX(1.0028);'>info@sarportal.com</div>
<div class='t' style='left:577.12px;top:669.97px;font-size:13.33px;line-height:13.33px;font-weight:400;color:#f2f2f2;transform:scaleX(0.8756);'>Erasure</div>
<div class='t' style='left:804.57px;top:670.49px;font-size:13.19px;line-height:13.19px;font-weight:400;color:#ffffff;transform:scaleX(0.9317);'>Information Received</div>
<div class='t' style='left:1191.74px;top:660.80px;font-size:13.77px;line-height:13.77px;font-weight:700;color:#f2f2f2;transform:scaleX(0.9581);'>Dec 31</div>
<div class='t' style='left:1191.75px;top:680.66px;font-size:12.75px;line-height:12.75px;font-weight:400;color:#18b27c;transform:scaleX(0.9488);'>25 days</div>
<div class='t' style='left:300.32px;top:731.98px;font-size:13.91px;line-height:13.91px;font-weight:700;color:#f2f2f2;transform:scaleX(0.9822);'>bahadur Sekhon</div>
<div class='t' style='left:279.10px;top:749.31px;font-size:12.46px;line-height:12.46px;font-weight:400;color:#cfcfcf;transform:scaleX(1.0028);'>info@sarportal.com</div>
<div class='t' style='left:577.09px;top:740.97px;font-size:13.33px;line-height:13.33px;font-weight:400;color:#f2f2f2;transform:scaleX(0.9091);'>Restrict</div>
<div class='t' style='left:804.57px;top:741.49px;font-size:13.19px;line-height:13.19px;font-weight:400;color:#ffffff;transform:scaleX(0.9317);'>Information Received</div>
<div class='t' style='left:1191.74px;top:731.80px;font-size:13.77px;line-height:13.77px;font-weight:700;color:#f2f2f2;transform:scaleX(0.9581);'>Dec 31</div>
<div class='t' style='left:1191.75px;top:751.66px;font-size:12.75px;line-height:12.75px;font-weight:400;color:#18b27c;transform:scaleX(0.9488);'>25 days</div>
<div class='t' style='left:300.34px;top:802.98px;font-size:13.91px;line-height:13.91px;font-weight:700;color:#f2f2f2;transform:scaleX(0.9633);'>Bahadur Sekhon</div>
<div class='t' style='left:279.10px;top:820.31px;font-size:12.46px;line-height:12.46px;font-weight:400;color:#cfcfcf;transform:scaleX(1.0028);'>info@sarportal.com</div>
<div class='t' style='left:578.00px;top:811.97px;font-size:13.33px;line-height:13.33px;font-weight:400;color:#f2f2f2;transform:scaleX(0.8571);'>Access</div>
<div class='t' style='left:804.54px;top:812.49px;font-size:13.19px;line-height:13.19px;font-weight:400;color:#ffffff;transform:scaleX(0.9589);'>Completed &amp; Fulfilled</div>
<div class='t' style='left:1191.74px;top:802.80px;font-size:13.77px;line-height:13.77px;font-weight:700;color:#f2f2f2;transform:scaleX(0.9581);'>Dec 31</div>
<div class='t' style='left:1191.75px;top:822.66px;font-size:12.75px;line-height:12.75px;font-weight:400;color:#18b27c;transform:scaleX(0.9488);'>25 days</div>
<div class='t' style='left:300.33px;top:873.98px;font-size:13.91px;line-height:13.91px;font-weight:700;color:#f2f2f2;transform:scaleX(0.9745);'>bahadur sekhon</div>
<div class='t' style='left:279.10px;top:891.31px;font-size:12.46px;line-height:12.46px;font-weight:400;color:#cfcfcf;transform:scaleX(1.0028);'>info@sarportal.com</div>
<div class='t' style='left:577.12px;top:882.97px;font-size:13.33px;line-height:13.33px;font-weight:400;color:#f2f2f2;transform:scaleX(0.8756);'>Erasure</div>
<div class='t' style='left:804.54px;top:883.49px;font-size:13.19px;line-height:13.19px;font-weight:400;color:#ffffff;transform:scaleX(0.9589);'>Completed &amp; Fulfilled</div>
<div class='t' style='left:1191.74px;top:873.80px;font-size:13.77px;line-height:13.77px;font-weight:700;color:#f2f2f2;transform:scaleX(0.9581);'>Dec 31</div>
<div class='t' style='left:1191.75px;top:893.66px;font-size:12.75px;line-height:12.75px;font-weight:400;color:#18b27c;transform:scaleX(0.9488);'>25 days</div>
</body></html>
